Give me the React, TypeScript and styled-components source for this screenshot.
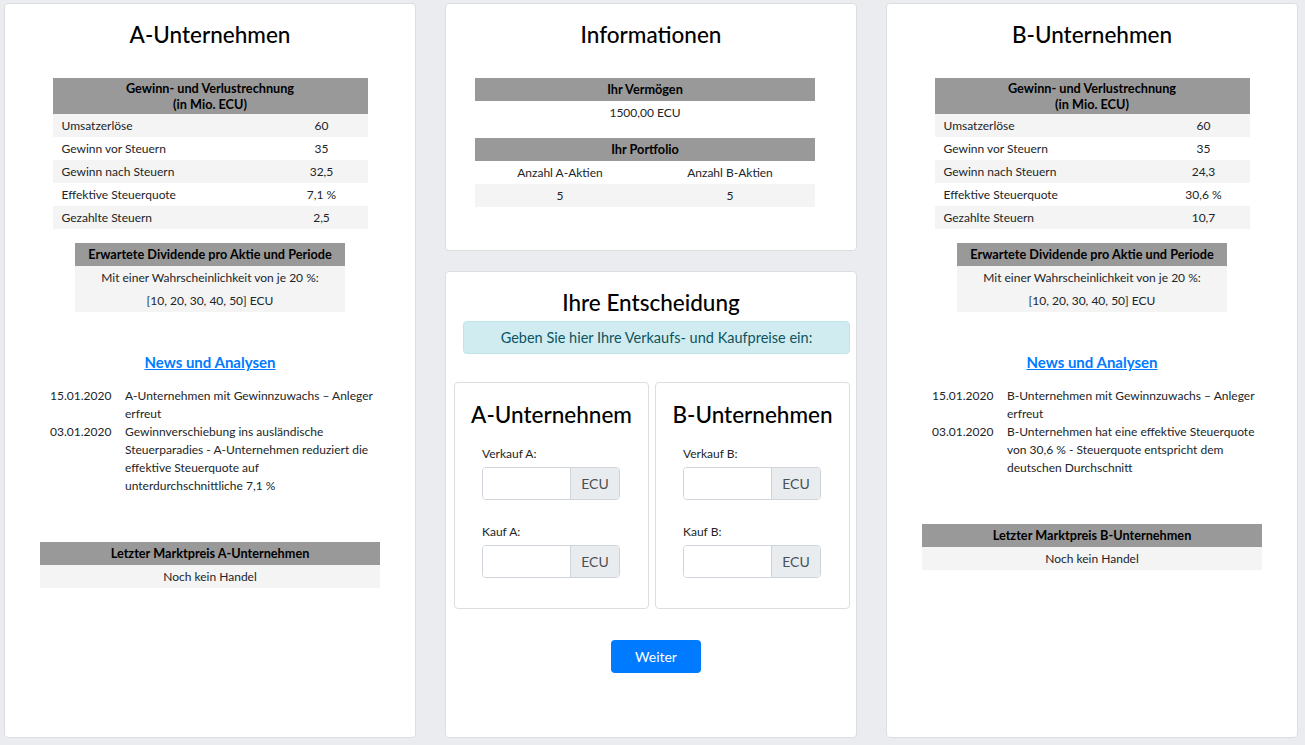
import styled, { createGlobalStyle } from 'styled-components'

const GlobalStyle = createGlobalStyle`
  body {
    margin: 0;
    background: #eaecef;
    font-family: Lato, 'Liberation Sans', sans-serif;
    font-size: 12px;
    color: #212529;
  }
`

const Page = styled.div`
  display: grid;
  grid-template-columns: repeat(3, 412px);
  column-gap: 29px;
  padding: 3px 0 0 4px;
  height: 738px;
  box-sizing: border-box;
`

const Column = styled.div`
  display: flex;
  flex-direction: column;
  gap: 20px;
`

const Card = styled.div<{ $grow?: boolean; $height?: number }>`
  background: #fff;
  border: 1px solid #dcdee0;
  border-radius: 4px;
  box-sizing: border-box;
  flex: ${(p) => (p.$grow ? 1 : 'none')};
  height: ${(p) => (p.$height ? `${p.$height}px` : 'auto')};
  display: flex;
  flex-direction: column;
  padding-top: 16px;
`

const Title = styled.h2`
  margin: 0 -24px;
  font-size: 22.5px;
  font-weight: 500;
  line-height: 29px;
  text-align: center;
  white-space: nowrap;
  color: #000;
`

const Table = styled.table<{ $width: number; $top: number; $left?: number }>`
  border-collapse: collapse;
  width: ${(p) => p.$width}px;
  margin-top: ${(p) => p.$top}px;
  margin-left: ${(p) => (p.$left !== undefined ? `${p.$left}px` : 'auto')};
  margin-right: auto;
  table-layout: fixed;
`

const Head = styled.th`
  background: #999999;
  color: #000;
  font-size: 12.7px;
  font-weight: 700;
  text-align: center;
  padding: 2px 4px;
  line-height: 19px;
`

const TallHead = styled(Head)`
  line-height: 16px;
`

const Row = styled.tr<{ $shade?: boolean }>`
  background: ${(p) => (p.$shade ? '#f4f4f4' : '#fff')};
`

const Cell = styled.td<{ $align?: string }>`
  padding: 0 9px;
  line-height: 23px;
  text-align: ${(p) => p.$align ?? 'center'};
`

const NewsLink = styled.a`
  display: block;
  margin-top: 40px;
  text-align: center;
  color: #007bff;
  font-weight: 700;
  font-size: 15px;
  line-height: 20px;
  text-decoration: underline;
`

const News = styled.div`
  display: grid;
  grid-template-columns: 75px 254px;
  margin: 15px 0 0 45px;
  line-height: 18px;
`

const Alert = styled.div`
  margin: 4px 6px 0 17px;
  background: #d1ecf1;
  border: 1px solid #bee5eb;
  border-radius: 4px;
  color: #0c5460;
  font-size: 14.5px;
  line-height: 19px;
  padding: 6px 0;
  text-align: center;
`

const Decisions = styled.div`
  display: grid;
  grid-template-columns: 195px 195px;
  column-gap: 6px;
  margin: 28px 0 0 8px;
`

const InnerCard = styled.div`
  border: 1px solid #dcdee0;
  border-radius: 4px;
  padding: 17px 27px 30px;
`

const Label = styled.div<{ $top: number }>`
  margin-top: ${(p) => p.$top}px;
  line-height: 15px;
`

const InputGroup = styled.div`
  display: flex;
  margin-top: 6px;
  width: 138px;
  height: 33px;
  border: 1px solid #ced4da;
  border-radius: 4px;
  box-sizing: border-box;
  overflow: hidden;
`

const Input = styled.input`
  flex: 1;
  min-width: 0;
  border: none;
  outline: none;
  padding: 0 8px;
  font: inherit;
`

const Addon = styled.span`
  width: 48px;
  background: #e9ecef;
  border-left: 1px solid #ced4da;
  color: #495057;
  font-size: 14px;
  display: flex;
  align-items: center;
  justify-content: center;
`

const Button = styled.button`
  margin: 31px 0 0 165px;
  width: 90px;
  height: 33px;
  background: #007bff;
  border: none;
  border-radius: 4px;
  color: #fff;
  font-family: inherit;
  font-size: 14px;
`

type Company = {
  name: string
  pl: [string, string][]
  news: [string, string][]
}

const companies: Company[] = [
  {
    name: 'A',
    pl: [
      ['Umsatzerlöse', '60'],
      ['Gewinn vor Steuern', '35'],
      ['Gewinn nach Steuern', '32,5'],
      ['Effektive Steuerquote', '7,1 %'],
      ['Gezahlte Steuern', '2,5'],
    ],
    news: [
      ['15.01.2020', 'A-Unternehmen mit Gewinnzuwachs – Anleger erfreut'],
      [
        '03.01.2020',
        'Gewinnverschiebung ins ausländische Steuerparadies - A-Unternehmen reduziert die effektive Steuerquote auf unterdurchschnittliche 7,1 %',
      ],
    ],
  },
  {
    name: 'B',
    pl: [
      ['Umsatzerlöse', '60'],
      ['Gewinn vor Steuern', '35'],
      ['Gewinn nach Steuern', '24,3'],
      ['Effektive Steuerquote', '30,6 %'],
      ['Gezahlte Steuern', '10,7'],
    ],
    news: [
      ['15.01.2020', 'B-Unternehmen mit Gewinnzuwachs – Anleger erfreut'],
      [
        '03.01.2020',
        'B-Unternehmen hat eine effektive Steuerquote von 30,6 % - Steuerquote entspricht dem deutschen Durchschnitt',
      ],
    ],
  },
]

const CompanyCard = ({ c }: { c: Company }) => (
  <Card $grow>
    <Title>{c.name}-Unternehmen</Title>
    <Table $width={315} $top={29}>
      <colgroup>
        <col style={{ width: 223 }} />
        <col />
      </colgroup>
      <thead>
        <tr>
          <TallHead colSpan={2}>
            Gewinn- und Verlustrechnung
            <br />
            (in Mio. ECU)
          </TallHead>
        </tr>
      </thead>
      <tbody>
        {c.pl.map(([k, v], i) => (
          <Row key={k} $shade={i % 2 === 0}>
            <Cell $align="left">{k}</Cell>
            <Cell>{v}</Cell>
          </Row>
        ))}
      </tbody>
    </Table>
    <Table $width={270} $top={14}>
      <thead>
        <tr>
          <Head>Erwartete Dividende pro Aktie und Periode</Head>
        </tr>
      </thead>
      <tbody>
        <Row $shade>
          <Cell>Mit einer Wahrscheinlichkeit von je 20 %:</Cell>
        </Row>
        <Row $shade>
          <Cell>[10, 20, 30, 40, 50] ECU</Cell>
        </Row>
      </tbody>
    </Table>
    <NewsLink href="#">News und Analysen</NewsLink>
    <News>
      {c.news.map(([d, t]) => [<span key={d}>{d}</span>, <span key={t}>{t}</span>])}
    </News>
    <Table $width={340} $top={47}>
      <thead>
        <tr>
          <Head>Letzter Marktpreis {c.name}-Unternehmen</Head>
        </tr>
      </thead>
      <tbody>
        <Row $shade>
          <Cell>Noch kein Handel</Cell>
        </Row>
      </tbody>
    </Table>
  </Card>
)

const Decision = ({ title, name }: { title: string; name: string }) => (
  <InnerCard>
    <Title>{title}</Title>
    <Label $top={17}>Verkauf {name}:</Label>
    <InputGroup>
      <Input />
      <Addon>ECU</Addon>
    </InputGroup>
    <Label $top={24}>Kauf {name}:</Label>
    <InputGroup>
      <Input />
      <Addon>ECU</Addon>
    </InputGroup>
  </InnerCard>
)

export default function App() {
  return (
    <>
      <GlobalStyle />
      <Page>
        <CompanyCard c={companies[0]} />
        <Column>
          <Card $height={248}>
            <Title>Informationen</Title>
            <Table $width={340} $top={29} $left={29}>
              <thead>
                <tr>
                  <Head colSpan={2}>Ihr Vermögen</Head>
                </tr>
              </thead>
              <tbody>
                <Row>
                  <Cell colSpan={2}>1500,00 ECU</Cell>
                </Row>
              </tbody>
            </Table>
            <Table $width={340} $top={14} $left={29}>
              <thead>
                <tr>
                  <Head colSpan={2}>Ihr Portfolio</Head>
                </tr>
              </thead>
              <tbody>
                <Row>
                  <Cell>Anzahl A-Aktien</Cell>
                  <Cell>Anzahl B-Aktien</Cell>
                </Row>
                <Row $shade>
                  <Cell>5</Cell>
                  <Cell>5</Cell>
                </Row>
              </tbody>
            </Table>
          </Card>
          <Card $grow>
            <Title>Ihre Entscheidung</Title>
            <Alert>Geben Sie hier Ihre Verkaufs- und Kaufpreise ein:</Alert>
            <Decisions>
              <Decision title="A-Unternehnem" name="A" />
              <Decision title="B-Unternehmen" name="B" />
            </Decisions>
            <Button>Weiter</Button>
          </Card>
        </Column>
        <CompanyCard c={companies[1]} />
      </Page>
    </>
  )
}
